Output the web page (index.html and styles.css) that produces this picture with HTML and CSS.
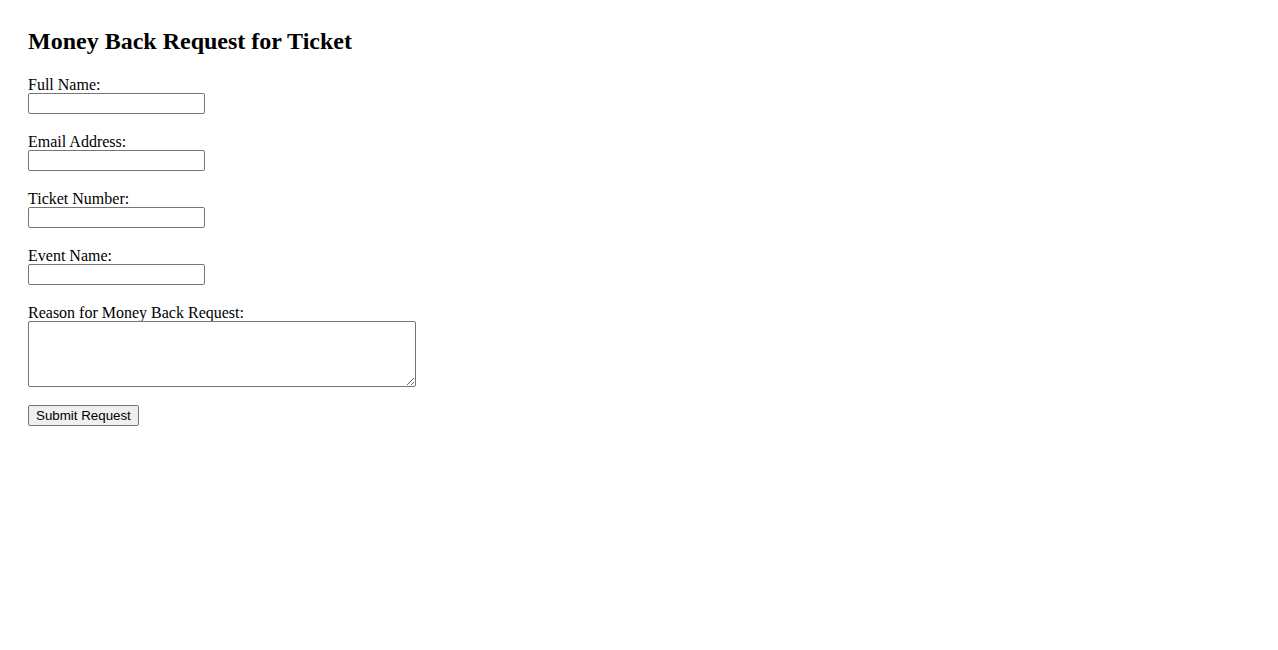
FILE: index.html
```html
<!DOCTYPE html>
<html lang="en">
<head>
    <meta charset="UTF-8">
    <meta name="viewport" content="width=device-width, initial-scale=1.0">
    <title>Money Back Request for Ticket</title>
    <link rel="stylesheet" href="styles.css">
</head>
<body>
    <h2>Money Back Request for Ticket</h2>
    <form id="refundForm">
        <div class="field">
            <label for="fullName">Full Name:</label>
            <input type="text" id="fullName" required>
        </div>
        <div class="field">
            <label for="email">Email Address:</label>
            <input type="email" id="email" required>
        </div>
        <div class="field">
            <label for="ticketNumber">Ticket Number:</label>
            <input type="text" id="ticketNumber" required>
        </div>
        <div class="field">
            <label for="eventName">Event Name:</label>
            <input type="text" id="eventName" required>
        </div>
        <div class="field">
            <label for="reason">Reason for Money Back Request:</label>
            <textarea id="reason" rows="4" cols="50" required></textarea>
        </div>
        <button type="submit">Submit Request</button>
    </form>
</body>
</html>
```

FILE: styles.css
```css
body {
    margin: 8px;
    padding: 20px;
    font-family: "Liberation Serif", "Times New Roman", serif;
    font-size: 16px;
    color: #000;
    background: #fff;
}
h2 {
    font-size: 24px;
    font-weight: bold;
    margin: 0 0 22.5px;
}
.field {
    display: flex;
    flex-direction: column;
    align-items: flex-start;
    margin-bottom: 21px;
}
.field label {
    line-height: 13px;
    padding-bottom: 2px;
}
.field:last-of-type {
    margin-bottom: 18px;
}
input[type="text"], input[type="email"] {
    box-sizing: border-box;
    width: 177px;
    height: 21px;
    padding: 1px 2px;
    border: 1px solid #767676;
    border-radius: 2px;
    font-family: "Liberation Sans", Arial, sans-serif;
    font-size: 13.33px;
    margin: 0;
}
textarea {
    box-sizing: border-box;
    width: 388px;
    height: 66px;
    padding: 2px;
    border: 1px solid #767676;
    border-radius: 2px;
    font-family: "Liberation Mono", monospace;
    font-size: 13.33px;
    margin: 0;
}
button {
    box-sizing: border-box;
    height: 21px;
    padding: 1px 7px;
    background-color: #efefef;
    color: #000;
    border: 1px solid #767676;
    border-radius: 2px;
    font-family: "Liberation Sans", Arial, sans-serif;
    font-size: 13.33px;
    margin: 0;
}
```
